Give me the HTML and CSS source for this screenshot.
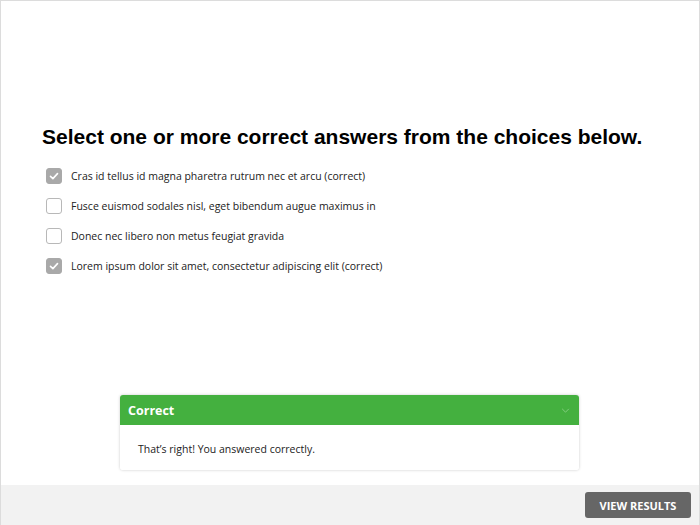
FILE: index.html
```html
<!DOCTYPE html>
<html lang="en">
<head>
    <meta charset="UTF-8">
    <title>Quiz question</title>
    <link rel="stylesheet" href="styles.css">
</head>
<body>
    <div class="frame">
        <div class="stage">
            <h1 class="prompt">Select one or more correct answers from the choices below.</h1>
            <ul class="choices">
                <li class="choice">
                    <span class="box checked"><svg viewBox="0 0 16 16" width="16" height="16"><path d="M4.5 8.3l2.4 2.3 4.6-5" fill="none" stroke="#fff" stroke-width="1.6" stroke-linecap="round" stroke-linejoin="round"/></svg></span>
                    <span>Cras id tellus id magna pharetra rutrum nec et arcu (correct)</span>
                </li>
                <li class="choice">
                    <span class="box"></span>
                    <span>Fusce euismod sodales nisl, eget bibendum augue maximus in</span>
                </li>
                <li class="choice">
                    <span class="box"></span>
                    <span>Donec nec libero non metus feugiat gravida</span>
                </li>
                <li class="choice">
                    <span class="box checked"><svg viewBox="0 0 16 16" width="16" height="16"><path d="M4.5 8.3l2.4 2.3 4.6-5" fill="none" stroke="#fff" stroke-width="1.6" stroke-linecap="round" stroke-linejoin="round"/></svg></span>
                    <span>Lorem ipsum dolor sit amet, consectetur adipiscing elit (correct)</span>
                </li>
            </ul>

            <div class="feedback">
                <div class="feedback-head">
                    <span>Correct</span>
                    <svg viewBox="0 0 10 6" width="9" height="5"><path d="M1 1l4 4 4-4" fill="none" stroke="#8fd28b" stroke-width="1"/></svg>
                </div>
                <div class="feedback-body">That’s right! You answered correctly.</div>
            </div>
        </div>
        <div class="footer">
            <button class="results">VIEW RESULTS</button>
        </div>
    </div>
</body>
</html>
```

FILE: styles.css
```css
html, body {
    margin: 0;
    padding: 0;
    background: #fff;
}
.frame {
    width: 700px;
    height: 525px;
    box-sizing: border-box;
    border: 1px solid #dcdcdc;
    border-bottom: none;
    display: flex;
    flex-direction: column;
}
.stage {
    flex: 1;
    padding: 123px 0 0 41px;
    display: flex;
    flex-direction: column;
}
.prompt {
    margin: 0 0 11px;
    font-family: "Liberation Sans", Arial, sans-serif;
    font-size: 21px;
    font-weight: bold;
    color: #000;
    line-height: 26px;
}
.choices {
    list-style: none;
    margin: 0;
    padding: 0 0 0 4px;
}
.choice {
    display: flex;
    align-items: center;
    height: 30px;
    gap: 9px;
    font-family: "Open Sans", "Noto Sans", sans-serif;
    font-size: 10.5px;
    color: #222;
}
.box {
    width: 16px;
    height: 16px;
    box-sizing: border-box;
    border: 1px solid #b8b8b8;
    border-radius: 3px;
    background: #fff;
    flex-shrink: 0;
    display: flex;
}
.box.checked {
    background: #a9a9a9;
    border-color: #a9a9a9;
}
.box svg {
    margin: -1px;
}
.feedback {
    margin: 114px 0 0 78px;
    width: 459px;
    border-radius: 3px;
    overflow: hidden;
    box-shadow: 0 0 3px rgba(0,0,0,0.22);
    font-family: "Open Sans", "Noto Sans", sans-serif;
}
.feedback-head {
    background: #44b03f;
    height: 30px;
    padding: 0 9px 0 8px;
    display: flex;
    align-items: center;
    justify-content: space-between;
    color: #fff;
    font-weight: bold;
    font-size: 12.5px;
}
.feedback-body {
    background: #fff;
    padding: 16px 18px 13px;
    font-size: 10.5px;
    color: #222;
    line-height: 16px;
}
.footer {
    height: 40px;
    background: #f2f2f2;
    display: flex;
    justify-content: flex-end;
    align-items: center;
    padding-right: 8px;
}
.results {
    background: #666;
    color: #fff;
    border: none;
    border-radius: 3px;
    width: 106px;
    height: 26px;
    font-family: "Open Sans", "Noto Sans", sans-serif;
    font-weight: bold;
    font-size: 11px;
    padding: 0;
    cursor: pointer;
}
```
